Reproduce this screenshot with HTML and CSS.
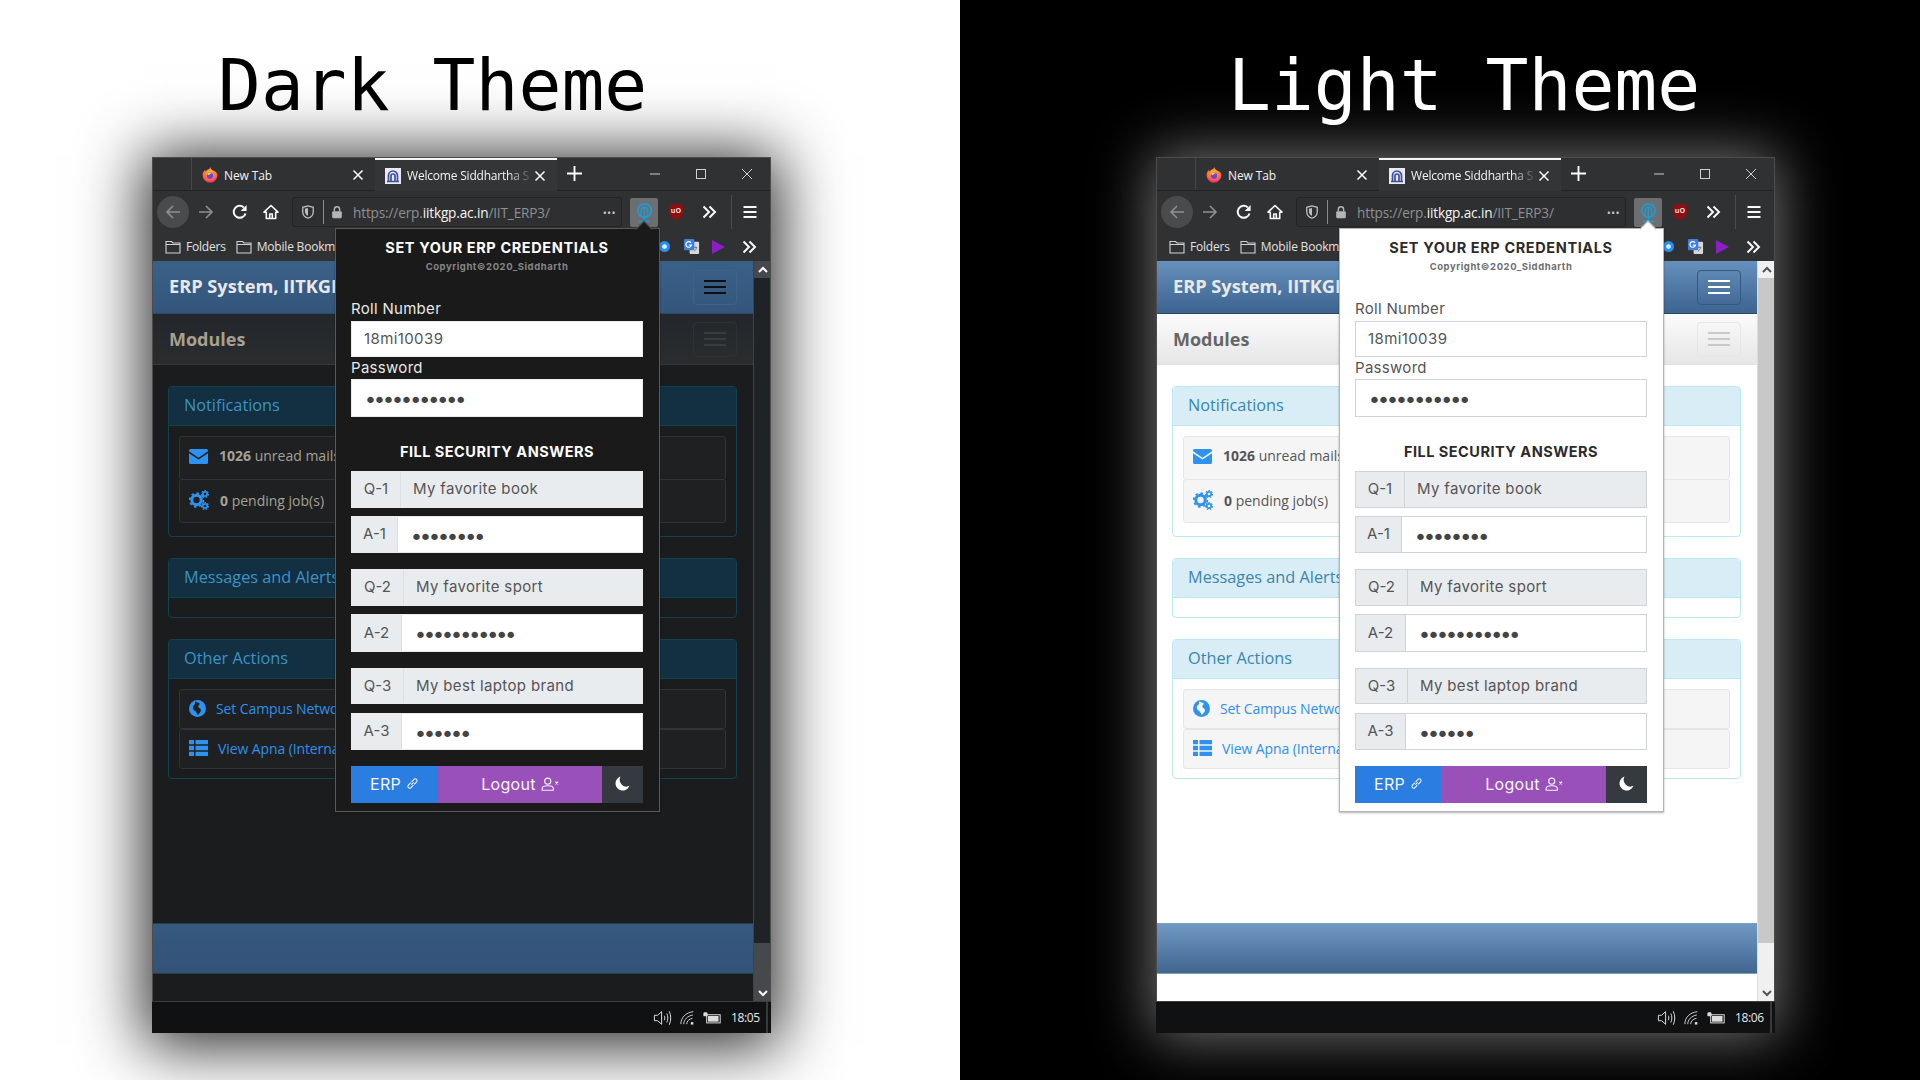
FILE: index.html
```html
<!DOCTYPE html>
<html lang="en">
<head>
  <meta charset="UTF-8" />
  <title>ERP Credentials: Dark and Light Theme</title>
  <link rel="stylesheet" href="styles.css">
</head>
<body>
  <!-- shared icons -->
  <svg class="sprite" width="0" height="0">
    <defs>
      <radialGradient id="fxOuter" cx="50%" cy="35%" r="70%">
        <stop offset="0" stop-color="#ffbd2e"/><stop offset="0.6" stop-color="#ff7139"/><stop offset="1" stop-color="#e31587"/>
      </radialGradient>
    </defs>
    <symbol id="i-firefox" viewBox="0 0 16 16">
      <path d="M8 15.800A7.500 7.500 0 0 1 .5 8.300C.5 5.800 1.700 4 3 3L3.800 4.800C4.500 3.400 5.600 2.600 6.600 2.300 7.400 2.100 8 1.200 8.200 0 9 1.400 9.200 2.600 10.800 3.200 13.800 4.300 15.500 6 15.500 8.300A7.500 7.500 0 0 1 8 15.800Z" fill="url(#fxOuter)"/>
      <circle cx="8" cy="8.800" r="3.200" fill="#7b3fd0"/>
      <path d="M5 7C6 5.400 8.600 5.600 10 6.600 8.600 6.400 7.600 7 7.400 8 6.600 8 5.600 7.800 5 7Z" fill="#ffd567"/>
    </symbol>
    <symbol id="i-iit" viewBox="0 0 16 16">
      <rect width="16" height="16" fill="#e9eaf4"/>
      <path d="M3.500 13V7.500a4.500 4.500 0 0 1 9 0V13M6 13V8a2 2 0 0 1 4 0v5M2 13.500h12" fill="none" stroke="#3d4f9b" stroke-width="1.700"/>
    </symbol>
    <symbol id="i-close" viewBox="0 0 12 12">
      <path d="M1.500 1.500l9 9M10.500 1.500l-9 9" fill="none" stroke="currentColor" stroke-width="1.500"/>
    </symbol>
    <symbol id="i-back" viewBox="0 0 16 16">
      <path d="M15 8H2M8 2L2 8l6 6" fill="none" stroke="currentColor" stroke-width="1.600"/>
    </symbol>
    <symbol id="i-forward" viewBox="0 0 16 16">
      <path d="M1 8h13M8 2l6 6-6 6" fill="none" stroke="currentColor" stroke-width="1.600"/>
    </symbol>
    <symbol id="i-reload" viewBox="0 0 16 16">
      <path d="M13.500 9.500A6 6 0 1 1 11.800 3.400" fill="none" stroke="currentColor" stroke-width="2"/>
      <path d="M14.600 1v6h-6z" fill="currentColor"/>
    </symbol>
    <symbol id="i-home" viewBox="0 0 16 16">
      <path d="M8 1.500L1 8.200h2.300V14.500h9.400V8.200H15zM6.700 14V10h2.600v4" fill="none" stroke="currentColor" stroke-width="1.600" stroke-linejoin="round"/>
    </symbol>
    <symbol id="i-shield" viewBox="0 0 16 16">
      <path d="M8 1L2 2.600v5C2 11.200 4.600 14 8 15c3.400-1 6-3.800 6-7.400v-5z" fill="none" stroke="currentColor" stroke-width="1.500"/>
      <path d="M8 3.500L4.500 4.400v3.200C4.500 9.800 6 11.400 8 12.300z" fill="currentColor"/>
    </symbol>
    <symbol id="i-lock" viewBox="0 0 16 16">
      <path d="M5 7V5a3 3 0 0 1 6 0v2" fill="none" stroke="currentColor" stroke-width="1.600"/>
      <rect x="2.500" y="7" width="11" height="8" rx="1.200" fill="currentColor"/>
    </symbol>
    <symbol id="i-ext" viewBox="0 0 18 22">
      <circle cx="9" cy="9" r="7.200" fill="none" stroke="currentColor" stroke-width="1.800"/>
      <path d="M5.500 15V9a3.500 3.500 0 0 1 7 0v6M9 6v14M3 20.500h12" fill="none" stroke="currentColor" stroke-width="1.500"/>
    </symbol>
    <symbol id="i-chevrons" viewBox="0 0 16 16">
      <path d="M2.500 2.500L8 8l-5.500 5.500M8.500 2.500L14 8l-5.500 5.500" fill="none" stroke="currentColor" stroke-width="2"/>
    </symbol>
    <symbol id="i-menu" viewBox="0 0 16 16">
      <path d="M1.500 3h13M1.500 8h13M1.500 13h13" fill="none" stroke="currentColor" stroke-width="1.900"/>
    </symbol>
    <symbol id="i-folder" viewBox="0 0 16 16">
      <path d="M1 14V2.500h5.500l1.500 1.500h7V14zM1 5.500h14" fill="none" stroke="currentColor" stroke-width="1.100"/>
    </symbol>
    <symbol id="i-translate" viewBox="0 0 18 18">
      <rect x="7" y="4" width="10" height="13" rx="1" fill="#d8d8d8"/>
      <rect x="1" y="1" width="11" height="12" rx="1" fill="#3d7ee0"/>
      <path d="M8.500 5A3 3 0 1 0 9 7.500H6.500" fill="none" stroke="#fff" stroke-width="1.200"/>
      <path d="M11.500 10h3.500M13 9v1M14.500 10c-.4 2-1.800 3.400-3 4" fill="none" stroke="#777" stroke-width="1"/>
    </symbol>
    <symbol id="i-mail" viewBox="0 0 19 15">
      <path d="M1.500 0h16A1.500 1.500 0 0 1 19 1.500v.8L9.500 8.800 0 2.300v-.8A1.500 1.500 0 0 1 1.500 0z" fill="currentColor"/>
      <path d="M0 4.200l9.500 6.400L19 4.200v9.300a1.500 1.500 0 0 1-1.500 1.500h-16A1.500 1.500 0 0 1 0 13.500z" fill="currentColor"/>
    </symbol>
    <symbol id="i-cogs" viewBox="0 0 20 20">
      <circle cx="7.500" cy="10" r="4.700" fill="none" stroke="currentColor" stroke-width="3"/>
      <circle cx="7.500" cy="10" r="6.800" fill="none" stroke="currentColor" stroke-width="1.800" stroke-dasharray="2.600 2.700"/>
      <circle cx="16" cy="4" r="2.200" fill="none" stroke="currentColor" stroke-width="1.700"/>
      <circle cx="16" cy="4" r="3.500" fill="none" stroke="currentColor" stroke-width="1.100" stroke-dasharray="1.500 1.600"/>
      <circle cx="16" cy="16" r="2.200" fill="none" stroke="currentColor" stroke-width="1.700"/>
      <circle cx="16" cy="16" r="3.500" fill="none" stroke="currentColor" stroke-width="1.100" stroke-dasharray="1.500 1.600"/>
    </symbol>
    <symbol id="i-globe" viewBox="0 0 17 17">
      <circle cx="8.500" cy="8.500" r="8.500" fill="currentColor"/>
      <path d="M6 1.500C8 2 10 2.500 11 4 9.500 5 9 6 9.500 7.500 11 8 12 9 12 11 11 12.500 10 14 8.500 15 8 13 7 11.500 5.500 10.500 4 9.500 3.500 8 4 6 5 5.500 6.500 4 6 1.500Z" fill="var(--item-bg)"/>
    </symbol>
    <symbol id="i-list" viewBox="0 0 19 16">
      <path d="M0 0h5v4.300H0zM6.500 0H19v4.300H6.500zM0 5.800h5v4.400H0zM6.500 5.800H19v4.400H6.500zM0 11.700h5V16H0zM6.500 11.700H19V16H6.500z" fill="currentColor"/>
    </symbol>
    <symbol id="i-link" viewBox="0 0 12 12">
      <path d="M5 7l2-2M4.500 5.200L2.200 7.500a1.700 1.700 0 0 0 2.400 2.400l2.200-2.300M7.500 6.800l2.300-2.300a1.700 1.700 0 0 0-2.400-2.400L5.200 4.400" fill="none" stroke="currentColor" stroke-width="1"/>
    </symbol>
    <symbol id="i-userx" viewBox="0 0 16 12">
      <circle cx="6" cy="3.500" r="2.700" fill="none" stroke="currentColor" stroke-width="1"/>
      <path d="M1 11.500V10c0-1.500 1.500-2.500 5-2.500s5 1 5 2.500v1.500z" fill="none" stroke="currentColor" stroke-width="1"/>
      <path d="M12.800 4l2.400 2.400M15.200 4l-2.400 2.400" fill="none" stroke="currentColor" stroke-width="1"/>
    </symbol>
    <symbol id="i-moon" viewBox="0 0 14 14">
      <path d="M5.200.5A6.700 6.700 0 1 0 13.500 9.200 6.300 6.300 0 0 1 5.200.5Z" fill="currentColor"/>
    </symbol>
    <symbol id="i-speaker" viewBox="0 0 20 20">
      <path d="M1 7h3.500L9 3v14l-4.500-4H1zM12 7.500c.8 1.600.8 3.400 0 5M14.800 5c1.500 3 1.500 7 0 10M17.500 2.500c2.200 4.500 2.200 10.500 0 15" fill="none" stroke="currentColor" stroke-width="1.100"/>
    </symbol>
    <symbol id="i-wifi" viewBox="0 0 18 18">
      <path d="M1 17C1 9 7 3 16 2M4.500 17c0-5.500 4.500-10 11-11M8 17c0-3.500 3-6.500 7-7" fill="none" stroke="currentColor" stroke-width="1.100"/>
      <rect x="13" y="14.500" width="3" height="3" fill="currentColor"/>
    </symbol>
    <symbol id="i-battery" viewBox="0 0 22 16">
      <rect x="4.500" y="4" width="16.500" height="10" fill="none" stroke="currentColor" stroke-width="1.200"/>
      <rect x="6" y="5.500" width="13" height="7" fill="currentColor"/>
      <rect x="0.500" y="1" width="5" height="5" rx="1.500" fill="currentColor"/>
    </symbol>
  </svg>

  <main class="sheet">

    <section class="stage stage-white">
      <h1 class="stage-title">Dark Theme</h1>
      <div class="window dark">
        <div class="tabstrip">
          <div class="tab-gap"></div>
          <div class="tab">
            <svg class="favicon"><use href="#i-firefox"/></svg>
            <span class="tab-title">New Tab</span>
            <svg class="tab-close"><use href="#i-close"/></svg>
          </div>
          <div class="tab tab-active">
            <svg class="favicon"><use href="#i-iit"/></svg>
            <span class="tab-title">Welcome Siddhartha S</span>
            <svg class="tab-close"><use href="#i-close"/></svg>
          </div>
          <div class="tab-new">
            <svg viewBox="0 0 16 16"><path d="M8 0v16M0 8h16" stroke="currentColor" stroke-width="2"/></svg>
          </div>
          <div class="win-controls">
            <span class="win-btn"><svg viewBox="0 0 10 10"><path d="M0 5h10" stroke="currentColor"/></svg></span>
            <span class="win-btn"><svg viewBox="0 0 10 10"><rect x=".5" y=".5" width="9" height="9" fill="none" stroke="currentColor"/></svg></span>
            <span class="win-btn"><svg viewBox="0 0 10 10"><path d="M0 0l10 10M10 0L0 10" stroke="currentColor"/></svg></span>
          </div>
        </div>

        <div class="toolbar">
          <span class="tool tool-back"><svg><use href="#i-back"/></svg></span>
          <span class="tool tool-dim"><svg><use href="#i-forward"/></svg></span>
          <span class="tool tool-reload"><svg><use href="#i-reload"/></svg></span>
          <span class="tool"><svg><use href="#i-home"/></svg></span>
          <div class="urlbar">
            <svg class="url-shield"><use href="#i-shield"/></svg>
            <span class="url-sep"></span>
            <svg class="url-lock"><use href="#i-lock"/></svg>
            <span class="url-text">https://erp.<b>iitkgp.ac.in</b>/IIT_ERP3/</span>
            <span class="url-more">•••</span>
          </div>
          <span class="ext-btn"><svg><use href="#i-ext"/></svg></span>
          <span class="tool tool-ublock">
            <svg viewBox="0 0 18 20">
              <path d="M9 .5L1 2.500v7C1 14.500 4.500 18 9 19.500c4.500-1.500 8-5 8-10v-7z" fill="#8a1015"/>
              <text x="9" y="11.500" text-anchor="middle" class="ublock-text">uO</text>
            </svg>
          </span>
          <span class="tool tool-more"><svg class="chev"><use href="#i-chevrons"/></svg></span>
          <span class="tool-sep"></span>
          <span class="tool"><svg><use href="#i-menu"/></svg></span>
        </div>

        <div class="bookmarks">
          <span class="bookmark"><svg><use href="#i-folder"/></svg>Folders</span>
          <span class="bookmark"><svg><use href="#i-folder"/></svg>Mobile Bookmarks</span>
          <div class="bookmark-exts">
            <span class="ext-dot"></span>
            <svg class="ext-translate"><use href="#i-translate"/></svg>
            <span class="ext-play"></span>
            <svg class="chev"><use href="#i-chevrons"/></svg>
          </div>
        </div>

        <div class="viewport">
          <div class="page">
            <header class="site-head">
              <span class="site-brand">ERP System, IITKGP</span>
              <span class="burger burger-main"><i></i><i></i><i></i></span>
            </header>
            <div class="modules-bar">
              <span class="modules-title">Modules</span>
              <span class="burger burger-soft"><i></i><i></i><i></i></span>
            </div>

            <div class="panel panel-notifications">
              <div class="panel-head">Notifications</div>
              <div class="panel-body">
                <div class="item"><svg class="ic ic-mail"><use href="#i-mail"/></svg><span><b>1026</b> unread mails</span></div>
                <div class="item"><svg class="ic ic-cogs"><use href="#i-cogs"/></svg><span><b>0</b> pending job(s)</span></div>
              </div>
            </div>

            <div class="panel panel-messages">
              <div class="panel-head">Messages and Alerts</div>
              <div class="panel-body"></div>
            </div>

            <div class="panel panel-actions">
              <div class="panel-head">Other Actions</div>
              <div class="panel-body">
                <div class="item"><svg class="ic ic-globe"><use href="#i-globe"/></svg><a>Set Campus Network</a></div>
                <div class="item"><svg class="ic ic-list"><use href="#i-list"/></svg><a>View Apna (Internal)</a></div>
              </div>
            </div>

            <div class="page-footer"></div>
          </div>
          <div class="scrollbar">
            <span class="scroll-arrow">
              <svg viewBox="0 0 10 10"><path d="M1 7l4-4 4 4" fill="none" stroke="currentColor" stroke-width="2"/></svg>
            </span>
            <span class="scroll-thumb"></span>
            <span class="scroll-track">
              <svg viewBox="0 0 10 10"><path d="M1 3l4 4 4-4" fill="none" stroke="currentColor" stroke-width="2"/></svg>
            </span>
          </div>
        </div>

        <div class="taskbar">
          <svg class="tray-speaker"><use href="#i-speaker"/></svg>
          <svg class="tray-wifi"><use href="#i-wifi"/></svg>
          <svg class="tray-battery"><use href="#i-battery"/></svg>
          <span class="tray-time">18:05</span>
          <span class="tray-edge"></span>
        </div>

        <div class="popup">
          <h2 class="popup-title">SET YOUR ERP CREDENTIALS</h2>
          <p class="popup-copy">Copyright©2020_Siddharth</p>
          <label class="field-label label-roll">Roll Number</label>
          <input class="field field-roll" type="text" value="18mi10039">
          <label class="field-label label-pass">Password</label>
          <input class="field field-pass" type="password" value="abcdefghijk">
          <h2 class="popup-sub">FILL SECURITY ANSWERS</h2>

          <div class="qa qa-q1"><span class="addon w-49">Q-1</span><span class="qa-text">My favorite book</span></div>
          <div class="qa qa-a1"><span class="addon w-47">A-1</span><input class="qa-input" type="password" value="abcdefgh"></div>
          <div class="qa qa-q2"><span class="addon w-52">Q-2</span><span class="qa-text">My favorite sport</span></div>
          <div class="qa qa-a2"><span class="addon w-50">A-2</span><input class="qa-input" type="password" value="abcdefghijk"></div>
          <div class="qa qa-q3"><span class="addon w-52">Q-3</span><span class="qa-text">My best laptop brand</span></div>
          <div class="qa qa-a3"><span class="addon w-50">A-3</span><input class="qa-input" type="password" value="abcdef"></div>

          <div class="actions">
            <button class="btn btn-erp">ERP <svg><use href="#i-link"/></svg></button>
            <button class="btn btn-logout">Logout <svg><use href="#i-userx"/></svg></button>
            <button class="btn btn-theme"><svg><use href="#i-moon"/></svg></button>
          </div>
        </div>
        <span class="popup-arrow"></span>
      </div>
    </section>

    <section class="stage stage-black">
      <h1 class="stage-title">Light Theme</h1>
      <div class="window light">
        <div class="tabstrip">
          <div class="tab-gap"></div>
          <div class="tab">
            <svg class="favicon"><use href="#i-firefox"/></svg>
            <span class="tab-title">New Tab</span>
            <svg class="tab-close"><use href="#i-close"/></svg>
          </div>
          <div class="tab tab-active">
            <svg class="favicon"><use href="#i-iit"/></svg>
            <span class="tab-title">Welcome Siddhartha S</span>
            <svg class="tab-close"><use href="#i-close"/></svg>
          </div>
          <div class="tab-new">
            <svg viewBox="0 0 16 16"><path d="M8 0v16M0 8h16" stroke="currentColor" stroke-width="2"/></svg>
          </div>
          <div class="win-controls">
            <span class="win-btn"><svg viewBox="0 0 10 10"><path d="M0 5h10" stroke="currentColor"/></svg></span>
            <span class="win-btn"><svg viewBox="0 0 10 10"><rect x=".5" y=".5" width="9" height="9" fill="none" stroke="currentColor"/></svg></span>
            <span class="win-btn"><svg viewBox="0 0 10 10"><path d="M0 0l10 10M10 0L0 10" stroke="currentColor"/></svg></span>
          </div>
        </div>

        <div class="toolbar">
          <span class="tool tool-back"><svg><use href="#i-back"/></svg></span>
          <span class="tool tool-dim"><svg><use href="#i-forward"/></svg></span>
          <span class="tool tool-reload"><svg><use href="#i-reload"/></svg></span>
          <span class="tool"><svg><use href="#i-home"/></svg></span>
          <div class="urlbar">
            <svg class="url-shield"><use href="#i-shield"/></svg>
            <span class="url-sep"></span>
            <svg class="url-lock"><use href="#i-lock"/></svg>
            <span class="url-text">https://erp.<b>iitkgp.ac.in</b>/IIT_ERP3/</span>
            <span class="url-more">•••</span>
          </div>
          <span class="ext-btn"><svg><use href="#i-ext"/></svg></span>
          <span class="tool tool-ublock">
            <svg viewBox="0 0 18 20">
              <path d="M9 .5L1 2.500v7C1 14.500 4.500 18 9 19.500c4.500-1.500 8-5 8-10v-7z" fill="#8a1015"/>
              <text x="9" y="11.500" text-anchor="middle" class="ublock-text">uO</text>
            </svg>
          </span>
          <span class="tool tool-more"><svg class="chev"><use href="#i-chevrons"/></svg></span>
          <span class="tool-sep"></span>
          <span class="tool"><svg><use href="#i-menu"/></svg></span>
        </div>

        <div class="bookmarks">
          <span class="bookmark"><svg><use href="#i-folder"/></svg>Folders</span>
          <span class="bookmark"><svg><use href="#i-folder"/></svg>Mobile Bookmarks</span>
          <div class="bookmark-exts">
            <span class="ext-dot"></span>
            <svg class="ext-translate"><use href="#i-translate"/></svg>
            <span class="ext-play"></span>
            <svg class="chev"><use href="#i-chevrons"/></svg>
          </div>
        </div>

        <div class="viewport">
          <div class="page">
            <header class="site-head">
              <span class="site-brand">ERP System, IITKGP</span>
              <span class="burger burger-main"><i></i><i></i><i></i></span>
            </header>
            <div class="modules-bar">
              <span class="modules-title">Modules</span>
              <span class="burger burger-soft"><i></i><i></i><i></i></span>
            </div>

            <div class="panel panel-notifications">
              <div class="panel-head">Notifications</div>
              <div class="panel-body">
                <div class="item"><svg class="ic ic-mail"><use href="#i-mail"/></svg><span><b>1026</b> unread mails</span></div>
                <div class="item"><svg class="ic ic-cogs"><use href="#i-cogs"/></svg><span><b>0</b> pending job(s)</span></div>
              </div>
            </div>

            <div class="panel panel-messages">
              <div class="panel-head">Messages and Alerts</div>
              <div class="panel-body"></div>
            </div>

            <div class="panel panel-actions">
              <div class="panel-head">Other Actions</div>
              <div class="panel-body">
                <div class="item"><svg class="ic ic-globe"><use href="#i-globe"/></svg><a>Set Campus Network</a></div>
                <div class="item"><svg class="ic ic-list"><use href="#i-list"/></svg><a>View Apna (Internal)</a></div>
              </div>
            </div>

            <div class="page-footer"></div>
          </div>
          <div class="scrollbar">
            <span class="scroll-arrow">
              <svg viewBox="0 0 10 10"><path d="M1 7l4-4 4 4" fill="none" stroke="currentColor" stroke-width="2"/></svg>
            </span>
            <span class="scroll-thumb"></span>
            <span class="scroll-track">
              <svg viewBox="0 0 10 10"><path d="M1 3l4 4 4-4" fill="none" stroke="currentColor" stroke-width="2"/></svg>
            </span>
          </div>
        </div>

        <div class="taskbar">
          <svg class="tray-speaker"><use href="#i-speaker"/></svg>
          <svg class="tray-wifi"><use href="#i-wifi"/></svg>
          <svg class="tray-battery"><use href="#i-battery"/></svg>
          <span class="tray-time">18:06</span>
          <span class="tray-edge"></span>
        </div>

        <div class="popup">
          <h2 class="popup-title">SET YOUR ERP CREDENTIALS</h2>
          <p class="popup-copy">Copyright©2020_Siddharth</p>
          <label class="field-label label-roll">Roll Number</label>
          <input class="field field-roll" type="text" value="18mi10039">
          <label class="field-label label-pass">Password</label>
          <input class="field field-pass" type="password" value="abcdefghijk">
          <h2 class="popup-sub">FILL SECURITY ANSWERS</h2>

          <div class="qa qa-q1"><span class="addon w-49">Q-1</span><span class="qa-text">My favorite book</span></div>
          <div class="qa qa-a1"><span class="addon w-47">A-1</span><input class="qa-input" type="password" value="abcdefgh"></div>
          <div class="qa qa-q2"><span class="addon w-52">Q-2</span><span class="qa-text">My favorite sport</span></div>
          <div class="qa qa-a2"><span class="addon w-50">A-2</span><input class="qa-input" type="password" value="abcdefghijk"></div>
          <div class="qa qa-q3"><span class="addon w-52">Q-3</span><span class="qa-text">My best laptop brand</span></div>
          <div class="qa qa-a3"><span class="addon w-50">A-3</span><input class="qa-input" type="password" value="abcdef"></div>

          <div class="actions">
            <button class="btn btn-erp">ERP <svg><use href="#i-link"/></svg></button>
            <button class="btn btn-logout">Logout <svg><use href="#i-userx"/></svg></button>
            <button class="btn btn-theme"><svg><use href="#i-moon"/></svg></button>
          </div>
        </div>
        <span class="popup-arrow"></span>
      </div>
    </section>

  </main>
</body>
</html>
```

FILE: styles.css
```css
* {
  box-sizing: border-box;
}

html, body {
  margin: 0;
  height: 1080px;
  overflow: hidden;
}

body {
  font-family: "Open Sans", sans-serif;
}

.sprite {
  position: absolute;
}

.sheet {
  display: grid;
  grid-template-columns: 960px 960px;
  height: 1080px;
}

.stage {
  overflow: hidden;
  padding-top: 45px;
}

.stage-white {
  background: #fff;
  color: #000;
  padding-left: 152px;
}

.stage-black {
  background: #000;
  color: #fff;
  padding-left: 196px;
}

.stage-title {
  margin: 0 0 30px;
  height: 82px;
  font-family: "DejaVu Sans Mono", monospace;
  font-weight: 400;
  font-size: 71.3px;
  line-height: 82px;
  white-space: nowrap;
}

.stage-white .stage-title {
  padding-left: 66px;
}

.stage-black .stage-title {
  padding-left: 72px;
}

/* theme colours */
.dark {
  --page-bg: #1a1c1e;
  --head-top: #3b6088;
  --head-bottom: #34567c;
  --bar-top: #23262a;
  --bar-bottom: #2a2d30;
  --bar-border: #33363a;
  --modules: #a8a090;
  --panel-border: #14414e;
  --panel-head: #132f42;
  --panel-text: #3d93c4;
  --item-bg: #1e2022;
  --item-border: #303336;
  --item-text: #a5a096;
  --popup-bg: #1a1a1a;
  --popup-border: #5a5a5a;
  --popup-text: #fff;
  --copy-text: #858585;
  --label-text: #e8e8e8;
  --soft-border: #2e3236;
  --soft-bar: #3a3d40;
  --main-border: #3f6288;
  --main-bar: #0e0f10;
  --foot-top: #37597f;
  --foot-bottom: #335278;
  --foot-border: #2c3a4a;
  --thumb: #1f2325;
  --track: #46494c;
  --arrow: #fff;
  --arrow-bg: #46494c;
  --scroll-edge: #3f4244;
  --field-border: #e9ecef;
}

.light {
  --page-bg: #fff;
  --head-top: #6690bd;
  --head-bottom: #3d638f;
  --bar-top: #fbfbfb;
  --bar-bottom: #e6e6e6;
  --bar-border: #e0e0e0;
  --modules: #666;
  --panel-border: #bce8f1;
  --panel-head: #d9edf7;
  --panel-text: #3a86ad;
  --item-bg: #f5f5f5;
  --item-border: #e6e6e6;
  --item-text: #555;
  --popup-bg: #fff;
  --popup-border: #b4b4b4;
  --popup-text: #2b2b2b;
  --copy-text: #6f6f6f;
  --label-text: #555;
  --soft-border: #e6e6e6;
  --soft-bar: #c9c9c9;
  --main-border: #34597f;
  --main-bar: #fff;
  --foot-top: #6f98c3;
  --foot-bottom: #40668f;
  --foot-border: #7f9fbf;
  --thumb: #c8c8c8;
  --track: #f0f0f0;
  --arrow: #555;
  --arrow-bg: #f0f0f0;
  --scroll-edge: #ddd;
  --field-border: #ced4da;
}

/* browser window */
.window {
  position: relative;
  width: 619px;
  height: 876px;
  display: flex;
  flex-direction: column;
  background: #303133;
  color: #f2f2f2;
  font-size: 12px;
  outline: 1px solid #4c4c4c;
  outline-offset: -1px;
}

.dark {
  box-shadow: 0 5px 60px 8px rgba(0, 0, 0, 0.85);
}

.light {
  box-shadow: 0 0 55px 4px rgba(255, 255, 255, 0.45);
}

.tabstrip {
  display: flex;
  height: 34px;
  border-bottom: 1px solid #222;
  flex: none;
}

.tab-gap {
  width: 40px;
  border-right: 1px solid #454545;
}

.tab {
  display: flex;
  align-items: center;
  width: 183px;
  padding: 3px 11px 0 10px;
  gap: 6px;
}

.tab-active {
  width: 182px;
  padding-left: 10px;
  background: #343537;
  border-top: 3px solid #f4f4f4;
  padding-top: 0;
  margin-bottom: -1px;
}

.favicon {
  width: 16px;
  height: 16px;
  flex: none;
}

.tab-title {
  flex: 1;
  min-width: 0;
  white-space: nowrap;
  letter-spacing: -0.1px;
}

.tab-active .tab-title {
  margin-right: -5px;
  letter-spacing: -0.2px;
  -webkit-mask-image: linear-gradient(90deg, #000 80%, transparent 100%);
  mask-image: linear-gradient(90deg, #000 80%, transparent 100%);
}

.tab-close {
  width: 12px;
  height: 12px;
  flex: none;
  color: #fff;
}

.tab-new {
  display: flex;
  align-items: center;
  width: 35px;
  padding-left: 10px;
  color: #fff;
}

.tab-new svg {
  width: 15px;
  height: 15px;
}

.win-controls {
  display: flex;
  margin-left: auto;
  padding-right: 1px;
}

.win-btn {
  display: flex;
  align-items: center;
  justify-content: center;
  width: 46px;
  color: #cfcfcf;
}

.win-btn svg {
  width: 10px;
  height: 10px;
}

.toolbar {
  display: flex;
  align-items: center;
  height: 42px;
  padding-left: 5px;
  flex: none;
}

.tool {
  display: flex;
  align-items: center;
  justify-content: center;
  flex: none;
  width: 32px;
  height: 32px;
  color: #f8f8f8;
}

.tool svg {
  width: 16px;
  height: 16px;
}

.tool-back {
  margin-right: 1px;
  background: #4a4b4d;
  border-radius: 50%;
  color: #8f9092;
}

.tool-dim {
  color: #8f9092;
}

.tool-reload {
  margin-left: 2px;
  margin-right: -1px;
}

.urlbar {
  display: flex;
  align-items: center;
  width: 330px;
  height: 30px;
  margin-left: 5px;
  padding-left: 8px;
  border: 1px solid #232426;
  border-radius: 3px;
  background: #2e2f31;
}

.url-shield {
  width: 14px;
  height: 16px;
  color: #bdbdbd;
}

.url-sep {
  width: 1px;
  height: 24px;
  margin-left: 8px;
  background: #8a8a8a;
}

.url-lock {
  width: 14px;
  height: 16px;
  margin-left: 6px;
  color: #b5b5b5;
}

.url-text {
  margin-left: 9px;
  font-size: 13.6px;
  letter-spacing: -0.15px;
  color: #8f9092;
  white-space: nowrap;
}

.url-text b {
  font-weight: 400;
  color: #f4f4f4;
}

.url-more {
  margin-left: auto;
  margin-right: 5px;
  font-size: 11px;
  letter-spacing: 0.3px;
  color: #c4c4c4;
}

.ext-btn {
  display: flex;
  align-items: center;
  justify-content: center;
  flex: none;
  width: 28px;
  height: 29px;
  margin-left: 8px;
  border-radius: 2px;
  background: #6d6e70;
  color: #1f9bd4;
}

.ext-btn svg {
  width: 17px;
  height: 21px;
}

.tool-ublock {
  margin-left: 2px;
}

.tool-ublock svg {
  width: 16px;
  height: 20px;
}

.tool-more {
  margin-left: 1px;
}

.ublock-text {
  font-family: "Open Sans", sans-serif;
  font-size: 8px;
  font-weight: 700;
  fill: #f3d9d9;
}

.tool-sep {
  width: 1px;
  height: 34px;
  margin-left: 6px;
  margin-right: -8px;
  background: #4b4c4e;
  flex: none;
}

.tool-sep + .tool {
  margin-left: 10px;
}

.bookmarks {
  display: flex;
  align-items: center;
  height: 28px;
  padding-left: 13px;
  padding-bottom: 1px;
  flex: none;
  color: #e2e2e2;
}

.bookmark {
  display: flex;
  align-items: center;
  gap: 5px;
  margin-right: 10px;
  white-space: nowrap;
  letter-spacing: -0.2px;
}

.bookmark svg {
  width: 16px;
  height: 16px;
  color: #d2d2d2;
}

.bookmark-exts {
  display: flex;
  align-items: center;
  margin-left: auto;
  padding-right: 14px;
}

.ext-dot {
  width: 11px;
  height: 11px;
  border-radius: 50%;
  background: #2a8ff0;
  border: 3px solid #2a8ff0;
  box-shadow: inset 0 0 0 3px #dbeafe;
}

.ext-translate {
  width: 17px;
  height: 17px;
  margin-left: 13px;
}

.ext-play {
  width: 0;
  height: 0;
  margin-left: 12px;
  border-left: 13px solid #8a1fc7;
  border-top: 7px solid transparent;
  border-bottom: 7px solid transparent;
}

.bookmark-exts .chev {
  width: 16px;
  height: 16px;
  margin-left: 16px;
  color: #f8f8f8;
}

/* page in the viewport */
.viewport {
  display: flex;
  height: 740px;
  flex: none;
}

.page {
  display: flex;
  flex-direction: column;
  width: 601px;
  background: var(--page-bg);
  color: var(--item-text);
  overflow: hidden;
}

.site-head {
  display: flex;
  align-items: center;
  justify-content: space-between;
  height: 53px;
  padding: 0 16px 0 17px;
  background: linear-gradient(var(--head-top), var(--head-bottom));
  border-bottom: 1px solid #2a4763;
  flex: none;
}

.site-brand {
  margin-bottom: 2px;
  font-size: 18.2px;
  font-weight: 700;
  color: #e9e9e9;
  white-space: nowrap;
}

.burger {
  display: flex;
  flex-direction: column;
  align-items: center;
  justify-content: center;
  gap: 4px;
  width: 44px;
  height: 35px;
  border: 1px solid;
  border-radius: 4px;
}

.burger i {
  display: block;
  width: 22px;
  height: 2px;
}

.burger-main {
  border-color: var(--main-border);
}

.burger-main i {
  background: var(--main-bar);
}

.burger-soft {
  border-color: var(--soft-border);
}

.burger-soft i {
  background: var(--soft-bar);
}

.modules-bar {
  display: flex;
  align-items: center;
  justify-content: space-between;
  height: 51px;
  padding: 0 16px 0 17px;
  background: linear-gradient(var(--bar-top), var(--bar-bottom));
  border-bottom: 1px solid var(--bar-border);
  flex: none;
}

.modules-title {
  font-size: 18px;
  font-weight: 700;
  color: var(--modules);
}

.panel {
  margin: 21px 16px 0;
  border: 1px solid var(--panel-border);
  border-radius: 4px;
  flex: none;
}

.panel-head {
  display: flex;
  align-items: center;
  height: 39px;
  padding: 0 0 2px 15px;
  font-size: 16.3px;
  color: var(--panel-text);
  background: var(--panel-head);
  border-bottom: 1px solid var(--panel-border);
  border-radius: 3px 3px 0 0;
  white-space: nowrap;
}

.panel-body {
  min-height: 20px;
  padding: 10px;
}

.panel-messages .panel-body {
  padding: 0;
}

.panel-notifications {
  height: 151px;
}

.panel-messages {
  height: 60px;
}

.panel-actions {
  height: 140px;
}

.item {
  display: flex;
  align-items: center;
  height: 44px;
  padding: 0 0 2px 9px;
  font-size: 14px;
  background: var(--item-bg);
  border: 1px solid var(--item-border);
  border-radius: 3px;
  margin-top: -1px;
  white-space: nowrap;
}

.item:first-child {
  margin-top: 0;
}

.panel-notifications .item:first-child {
  padding-bottom: 6px;
}

.item b {
  font-weight: 700;
}

.panel-actions .item {
  height: 40px;
  margin-top: 0;
}

.item a {
  color: #2d90ee;
  letter-spacing: -0.1px;
}

.ic {
  flex: none;
  color: #2e93f0;
}

.ic-mail {
  width: 19px;
  height: 15px;
  margin: 3px 11px 0 0;
}

.ic-cogs {
  width: 20px;
  height: 20px;
  margin-right: 11px;
}

.ic-globe {
  width: 17px;
  height: 17px;
  margin-right: 10px;
}

.ic-list {
  width: 19px;
  height: 16px;
  margin-right: 10px;
}

.page-footer {
  height: 51px;
  margin-top: auto;
  margin-bottom: 27px;
  background: linear-gradient(var(--foot-top), var(--foot-bottom));
  border-top: 1px solid var(--foot-border);
  border-bottom: 1px solid var(--foot-border);
  flex: none;
}

.scrollbar {
  display: flex;
  flex-direction: column;
  width: 18px;
  background: var(--track);
  border-left: 1px solid var(--scroll-edge);
}

.scrollbar svg {
  width: 10px;
  height: 10px;
  color: var(--arrow);
}

.scroll-arrow {
  display: flex;
  align-items: center;
  justify-content: center;
  height: 17px;
  background: var(--arrow-bg);
  flex: none;
}

.scroll-thumb {
  height: 665px;
  background: var(--thumb);
  flex: none;
}

.scroll-track {
  display: flex;
  flex: 1;
  align-items: flex-end;
  justify-content: center;
  padding-bottom: 3px;
}

.taskbar {
  position: relative;
  display: flex;
  align-items: center;
  flex: 1;
  padding-left: 501px;
  background: #101112;
  border-top: 1px solid #3d3d3d;
  color: #dcdcdc;
}

.tray-speaker {
  width: 19px;
  height: 18px;
}

.tray-wifi {
  width: 15px;
  height: 15px;
  margin-left: 8px;
}

.tray-battery {
  width: 18px;
  height: 14px;
  margin-left: 8px;
}

.tray-time {
  margin-left: 10px;
  font-size: 12px;
  letter-spacing: -0.4px;
  color: #e8e8e8;
}

.tray-edge {
  margin-left: auto;
  width: 2px;
  height: 100%;
  margin-right: 3px;
  background: #3a3a3a;
}

/* extension popup */
.popup {
  position: absolute;
  left: 183px;
  top: 71px;
  width: 325px;
  height: 584px;
  padding: 9px 16px 0 15px;
  border: 1px solid var(--popup-border);
  background: var(--popup-bg);
  font-family: Inter, sans-serif;
  box-shadow: 0 1px 2px rgba(0, 0, 0, 0.3);
}

.popup-arrow {
  position: absolute;
  left: 486px;
  top: 66px;
  width: 12px;
  height: 12px;
  background: var(--popup-bg);
  border-top: 1px solid var(--popup-border);
  border-left: 1px solid var(--popup-border);
  transform: rotate(45deg);
}

.popup-title,
.popup-sub {
  margin: 0;
  height: 20px;
  font-size: 14.5px;
  font-weight: 700;
  line-height: 20px;
  text-align: center;
  color: var(--popup-text);
  letter-spacing: 0.6px;
  white-space: nowrap;
}

.popup-copy {
  margin: 2px 0 0;
  height: 14px;
  font-size: 9.5px;
  font-weight: 700;
  line-height: 14px;
  text-align: center;
  color: var(--copy-text);
  letter-spacing: 0.55px;
  white-space: nowrap;
}

.field-label {
  display: block;
  height: 20px;
  font-size: 15px;
  line-height: 20px;
  color: var(--label-text);
  letter-spacing: 0.3px;
}

.label-roll {
  margin-top: 25px;
}

.label-pass {
  margin-top: 1px;
}

.field {
  display: block;
  width: 100%;
  padding: 0 12px 2px;
  font-family: Inter, sans-serif;
  font-size: 15px;
  letter-spacing: 0.4px;
  color: #555;
  background: #fff;
  border: 1px solid var(--field-border);
  outline: none;
}

.field-roll {
  height: 36px;
  margin-top: 2px;
}

.field-pass {
  height: 38px;
  margin-top: 1px;
  padding-top: 5px;
  padding-bottom: 0;
  font-family: "DejaVu Sans", sans-serif;
  font-size: 22px;
  letter-spacing: -3.95px;
  color: #444;
}

.popup-sub {
  margin-top: 25px;
  letter-spacing: 0.5px;
}

.qa {
  display: flex;
  height: 37px;
  margin-top: 8px;
  border: 1px solid var(--field-border);
  font-size: 15px;
  color: #555;
}

.addon {
  display: flex;
  align-items: center;
  justify-content: center;
  flex: none;
  padding-bottom: 2px;
  background: #e9ecef;
  border-right: 1px solid var(--field-border);
}

.dark .addon {
  border-right-color: #dadfe4;
}

.w-47 {
  width: 46px;
}

.w-49 {
  width: 49px;
}

.w-50 {
  width: 50px;
}

.w-52 {
  width: 52px;
}

.qa-text {
  display: flex;
  align-items: center;
  flex: 1;
  padding: 0 0 2px 12px;
  background: #e9ecef;
  letter-spacing: 0.35px;
  white-space: nowrap;
}

.qa-input {
  flex: 1;
  min-width: 0;
  padding: 5px 12px 0;
  font-family: "DejaVu Sans", sans-serif;
  font-size: 22px;
  letter-spacing: -3.95px;
  color: #444;
  background: #fff;
  border: none;
  outline: none;
}

.qa-q1 {
  margin-top: 9px;
}

.qa-q2,
.qa-q3 {
  margin-top: 16px;
}

.qa-a2 {
  height: 38px;
}

.qa-q3 {
  height: 36px;
}

.qa-a3 {
  margin-top: 9px;
}

.actions {
  display: flex;
  height: 37px;
  margin-top: 16px;
}

.btn {
  display: flex;
  align-items: center;
  justify-content: center;
  gap: 5px;
  padding: 0 0 2px;
  border: none;
  font-family: Inter, sans-serif;
  font-size: 16px;
  letter-spacing: 0.3px;
  color: #f4f4ff;
}

.btn-erp {
  width: 87px;
  background: #2a7de1;
}

.btn-erp svg {
  width: 13px;
  height: 13px;
}

.btn-logout {
  width: 164px;
  background: #9950b8;
}

.btn-logout svg {
  width: 18px;
  height: 14px;
}

.btn-theme {
  flex: 1;
  background: #343a40;
  color: #fff;
}

.btn-theme svg {
  width: 15px;
  height: 15px;
}
```
